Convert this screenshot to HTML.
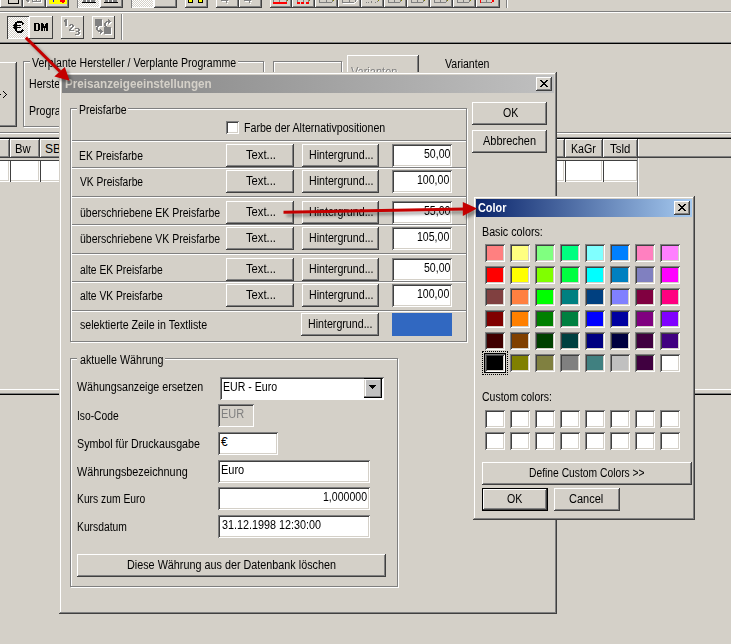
<!DOCTYPE html>
<html><head><meta charset="utf-8"><style>
html,body{margin:0;padding:0}
body{width:731px;height:644px;background:#d4d0c8;position:relative;overflow:hidden;font-family:"Liberation Sans",sans-serif;font-size:12px;color:#000}
body>div,body>span,body>svg{position:absolute}
.t{white-space:nowrap;line-height:14px;display:block;transform-origin:0 0}
</style></head><body>
<div style="left:0px;top:-16px;width:23px;height:24px;background:#d4d0c8;box-shadow:inset -1px -1px #404040,inset 1px 1px #ffffff,inset -2px -2px #808080,inset 2px 2px #d4d0c8;"></div>
<div style="left:23px;top:-16px;width:23px;height:24px;background:#d4d0c8;box-shadow:inset -1px -1px #404040,inset 1px 1px #ffffff,inset -2px -2px #808080,inset 2px 2px #d4d0c8;"></div>
<div style="left:46px;top:-16px;width:23px;height:24px;background:#d4d0c8;box-shadow:inset -1px -1px #404040,inset 1px 1px #ffffff,inset -2px -2px #808080,inset 2px 2px #d4d0c8;"></div>
<div style="left:77px;top:-16px;width:23px;height:24px;background:repeating-conic-gradient(#fff 0 25%,#d4d0c8 0 50%) 0 0/2px 2px;box-shadow:inset 1px 1px #808080,inset -1px -1px #ffffff"></div>
<div style="left:100px;top:-16px;width:23px;height:24px;background:#d4d0c8;box-shadow:inset -1px -1px #404040,inset 1px 1px #ffffff,inset -2px -2px #808080,inset 2px 2px #d4d0c8;"></div>
<div style="left:131px;top:-16px;width:23px;height:24px;background:repeating-conic-gradient(#fff 0 25%,#d4d0c8 0 50%) 0 0/2px 2px;box-shadow:inset 1px 1px #808080,inset -1px -1px #ffffff"></div>
<div style="left:154px;top:-16px;width:23px;height:24px;background:#d4d0c8;box-shadow:inset -1px -1px #404040,inset 1px 1px #ffffff,inset -2px -2px #808080,inset 2px 2px #d4d0c8;"></div>
<div style="left:185px;top:-16px;width:23px;height:24px;background:#d4d0c8;box-shadow:inset -1px -1px #404040,inset 1px 1px #ffffff,inset -2px -2px #808080,inset 2px 2px #d4d0c8;"></div>
<div style="left:216px;top:-16px;width:23px;height:24px;background:#d4d0c8;box-shadow:inset -1px -1px #404040,inset 1px 1px #ffffff,inset -2px -2px #808080,inset 2px 2px #d4d0c8;"></div>
<div style="left:239px;top:-16px;width:23px;height:24px;background:#d4d0c8;box-shadow:inset -1px -1px #404040,inset 1px 1px #ffffff,inset -2px -2px #808080,inset 2px 2px #d4d0c8;"></div>
<div style="left:270px;top:-16px;width:22px;height:24px;background:#d4d0c8;box-shadow:inset -1px -1px #404040,inset 1px 1px #ffffff,inset -2px -2px #808080,inset 2px 2px #d4d0c8;"></div>
<div style="left:292px;top:-16px;width:23px;height:24px;background:#d4d0c8;box-shadow:inset -1px -1px #404040,inset 1px 1px #ffffff,inset -2px -2px #808080,inset 2px 2px #d4d0c8;"></div>
<div style="left:315px;top:-16px;width:23px;height:24px;background:#d4d0c8;box-shadow:inset -1px -1px #404040,inset 1px 1px #ffffff,inset -2px -2px #808080,inset 2px 2px #d4d0c8;"></div>
<div style="left:338px;top:-16px;width:23px;height:24px;background:#d4d0c8;box-shadow:inset -1px -1px #404040,inset 1px 1px #ffffff,inset -2px -2px #808080,inset 2px 2px #d4d0c8;"></div>
<div style="left:361px;top:-16px;width:23px;height:24px;background:#d4d0c8;box-shadow:inset -1px -1px #404040,inset 1px 1px #ffffff,inset -2px -2px #808080,inset 2px 2px #d4d0c8;"></div>
<div style="left:384px;top:-16px;width:23px;height:24px;background:#d4d0c8;box-shadow:inset -1px -1px #404040,inset 1px 1px #ffffff,inset -2px -2px #808080,inset 2px 2px #d4d0c8;"></div>
<div style="left:407px;top:-16px;width:23px;height:24px;background:#d4d0c8;box-shadow:inset -1px -1px #404040,inset 1px 1px #ffffff,inset -2px -2px #808080,inset 2px 2px #d4d0c8;"></div>
<div style="left:430px;top:-16px;width:23px;height:24px;background:#d4d0c8;box-shadow:inset -1px -1px #404040,inset 1px 1px #ffffff,inset -2px -2px #808080,inset 2px 2px #d4d0c8;"></div>
<div style="left:453px;top:-16px;width:23px;height:24px;background:#d4d0c8;box-shadow:inset -1px -1px #404040,inset 1px 1px #ffffff,inset -2px -2px #808080,inset 2px 2px #d4d0c8;"></div>
<div style="left:476px;top:-16px;width:24px;height:24px;background:#d4d0c8;box-shadow:inset -1px -1px #404040,inset 1px 1px #ffffff,inset -2px -2px #808080,inset 2px 2px #d4d0c8;"></div>
<svg style="position:absolute;left:0;top:0" width="510" height="8"><rect x="8" y="0" width="1" height="4" fill="#000"/><rect x="18" y="0" width="1" height="4" fill="#000"/><rect x="8" y="3" width="11" height="1" fill="#000"/><rect x="27" y="1" width="3" height="1" fill="#fff"/><rect x="28" y="2" width="2" height="1" fill="#fff"/><rect x="33" y="0" width="1" height="3" fill="#fff"/><rect x="37" y="0" width="1" height="3" fill="#fff"/><rect x="41" y="0" width="1" height="3" fill="#fff"/><rect x="33" y="2" width="9" height="1" fill="#fff"/><rect x="26" y="0" width="3" height="1" fill="#808080"/><rect x="27" y="1" width="2" height="1" fill="#808080"/><rect x="32" y="0" width="1" height="2" fill="#808080"/><rect x="36" y="0" width="1" height="2" fill="#808080"/><rect x="40" y="0" width="1" height="2" fill="#808080"/><rect x="32" y="1" width="9" height="1" fill="#808080"/><rect x="49" y="0" width="18" height="4" fill="#ffff00"/><rect x="53" y="0" width="1" height="2" fill="#0000ff"/><rect x="60" y="0" width="5" height="2" fill="#ff0000"/><rect x="62" y="2" width="2" height="1" fill="#ff0000"/><rect x="82" y="2" width="14" height="1" fill="#000"/><rect x="83" y="0" width="3" height="2" fill="#808080"/><rect x="87" y="0" width="3" height="2" fill="#808080"/><rect x="91" y="0" width="4" height="2" fill="#808080"/><rect x="86" y="0" width="1" height="2" fill="#fff"/><rect x="90" y="0" width="1" height="2" fill="#fff"/><rect x="104" y="2" width="14" height="1" fill="#000"/><rect x="105" y="0" width="3" height="2" fill="#808080"/><rect x="109" y="0" width="3" height="2" fill="#808080"/><rect x="113" y="0" width="4" height="2" fill="#808080"/><rect x="108" y="0" width="1" height="2" fill="#fff"/><rect x="112" y="0" width="1" height="2" fill="#fff"/><rect x="188" y="0" width="5" height="3" fill="#000"/><rect x="189" y="0" width="3" height="2" fill="#ffff00"/><rect x="198" y="0" width="5" height="3" fill="#000"/><rect x="199" y="0" width="3" height="2" fill="#ffff00"/><rect x="222" y="1" width="7" height="1" fill="#fff"/><rect x="227" y="3" width="1" height="1" fill="#fff"/><rect x="221" y="0" width="7" height="1" fill="#808080"/><rect x="226" y="2" width="1" height="1" fill="#808080"/><rect x="226" y="0" width="1" height="2" fill="#808080"/><rect x="245" y="1" width="7" height="1" fill="#fff"/><rect x="250" y="3" width="1" height="1" fill="#fff"/><rect x="244" y="0" width="7" height="1" fill="#808080"/><rect x="249" y="2" width="1" height="1" fill="#808080"/><rect x="249" y="0" width="1" height="2" fill="#808080"/><rect x="273" y="0" width="1" height="2" fill="#808080"/><rect x="279" y="0" width="1" height="2" fill="#808080"/><rect x="286" y="0" width="1" height="2" fill="#808080"/><rect x="273" y="2" width="14" height="2" fill="#ff0000"/><rect x="287" y="0" width="1" height="1" fill="#808000"/><rect x="297" y="0" width="1" height="2" fill="#808080"/><rect x="303" y="0" width="1" height="2" fill="#808080"/><rect x="308" y="0" width="1" height="2" fill="#808080"/><rect x="297" y="2" width="3" height="2" fill="#ff0000"/><rect x="301" y="2" width="3" height="2" fill="#ff0000"/><rect x="306" y="2" width="3" height="2" fill="#ff0000"/><rect x="309" y="0" width="1" height="1" fill="#808000"/><rect x="319" y="0" width="1" height="3" fill="#808080"/><rect x="326" y="0" width="1" height="3" fill="#808080"/><rect x="332" y="0" width="1" height="2" fill="#808080"/><rect x="319" y="2" width="13" height="1" fill="#808080"/><rect x="333" y="0" width="1" height="1" fill="#808000"/><rect x="342" y="0" width="1" height="3" fill="#808080"/><rect x="349" y="0" width="1" height="2" fill="#808080"/><rect x="355" y="0" width="1" height="2" fill="#808080"/><rect x="342" y="2" width="12" height="1" fill="#808080"/><rect x="343" y="3" width="12" height="1" fill="#fff"/><rect x="355" y="2" width="1" height="1" fill="#fff"/><rect x="356" y="1" width="1" height="1" fill="#fff"/><rect x="357" y="0" width="1" height="1" fill="#fff"/><rect x="366" y="2" width="1" height="1" fill="#808080"/><rect x="368" y="2" width="1" height="1" fill="#808080"/><rect x="371" y="1" width="1" height="2" fill="#808080"/><rect x="375" y="2" width="1" height="1" fill="#808080"/><rect x="377" y="1" width="1" height="1" fill="#808080"/><rect x="378" y="0" width="1" height="1" fill="#808000"/><rect x="388" y="0" width="1" height="3" fill="#808080"/><rect x="394" y="0" width="1" height="3" fill="#808080"/><rect x="400" y="0" width="1" height="2" fill="#808080"/><rect x="388" y="2" width="12" height="1" fill="#808080"/><rect x="401" y="0" width="1" height="1" fill="#808000"/><rect x="411" y="0" width="1" height="3" fill="#808080"/><rect x="417" y="0" width="1" height="3" fill="#808080"/><rect x="423" y="0" width="1" height="2" fill="#808080"/><rect x="411" y="2" width="12" height="1" fill="#808080"/><rect x="424" y="0" width="1" height="1" fill="#808000"/><rect x="434" y="0" width="1" height="3" fill="#808080"/><rect x="440" y="0" width="1" height="3" fill="#808080"/><rect x="446" y="0" width="1" height="2" fill="#808080"/><rect x="434" y="2" width="12" height="1" fill="#808080"/><rect x="447" y="0" width="1" height="1" fill="#808000"/><rect x="457" y="0" width="1" height="3" fill="#808080"/><rect x="463" y="0" width="1" height="3" fill="#808080"/><rect x="469" y="0" width="1" height="2" fill="#808080"/><rect x="457" y="2" width="12" height="1" fill="#808080"/><rect x="470" y="0" width="1" height="1" fill="#808000"/><rect x="480" y="0" width="1" height="3" fill="#808080"/><rect x="486" y="0" width="1" height="2" fill="#808080"/><rect x="492" y="0" width="1" height="2" fill="#808080"/><rect x="481" y="2" width="11" height="1" fill="#808080"/><rect x="480" y="0" width="1" height="3" fill="#ff0000"/><rect x="492" y="0" width="2" height="2" fill="#ff0000"/><rect x="491" y="2" width="1" height="1" fill="#ff0000"/></svg>
<div style="left:506px;top:0px;width:1px;height:8px;background:#808080"></div>
<div style="left:507px;top:0px;width:1px;height:8px;background:#ffffff"></div>
<div style="left:0px;top:11px;width:731px;height:1px;background:#808080"></div>
<div style="left:0px;top:12px;width:731px;height:1px;background:#ffffff"></div>
<div style="left:7px;top:16px;width:22px;height:23px;background:repeating-conic-gradient(#fff 0 25%,#d4d0c8 0 50%) 0 0/2px 2px;box-shadow:inset 1px 1px #404040,inset -1px -1px #ffffff"></div>
<div style="left:29px;top:16px;width:24px;height:23px;background:#d4d0c8;box-shadow:inset -1px -1px #404040,inset 1px 1px #ffffff"></div>
<div style="left:61px;top:16px;width:23px;height:23px;background:#d4d0c8;box-shadow:inset -1px -1px #404040,inset 1px 1px #ffffff"></div>
<div style="left:92px;top:16px;width:23px;height:23px;background:#d4d0c8;box-shadow:inset -1px -1px #404040,inset 1px 1px #ffffff"></div>
<svg style="position:absolute;left:0;top:0" width="120" height="42"><path d="M17 21h5v1h-5zM15 22h8v1h-8zM15 23h2v1h-2zM22 23h2v1h-2zM14 24h3v1h-3zM22 24h1v1h-1zM13 25h8v1h-8zM14 26h3v1h-3zM13 27h8v1h-8zM14 28h3v1h-3zM15 29h2v1h-2zM22 29h1v1h-1zM15 30h2v1h-2zM21 30h3v1h-3zM16 31h7v1h-7zM17 32h5v1h-5z" fill="#000"/><path d="M34 23h5v1h-5zM34 30h5v1h-5zM34 24h2v6h-2zM38 24h2v6h-2zM41 23h2v8h-2zM46 23h2v8h-2zM43 24h1v3h-1zM45 24h1v3h-1zM44 26h1v5h-1zM43 26h3v2h-3z" fill="#000"/><path d="M66 20h2v7h-2zM65 21h1v2h-1zM71 25h3v1h-3zM70 26h2v1h-2zM73 26h2v2h-2zM72 28h2v1h-2zM71 29h2v1h-2zM70 30h2v1h-2zM70 31h5v1h-5zM76 29h4v1h-4zM79 30h2v2h-2zM77 32h3v1h-3zM79 33h2v2h-2zM76 35h4v1h-4zM96 20h7v7h-7zM105 28h7v7h-7zM98 27h2v1h-2zM97 28h2v3h-2zM98 31h3v1h-3zM99 32h2v1h-2zM101 30h1v5h-1zM102 31h1v3h-1zM103 32h1v1h-1zM106 27h2v1h-2zM105 24h2v3h-2zM106 23h2v1h-2zM107 22h2v1h-2zM109 20h1v5h-1zM110 21h1v3h-1zM111 22h1v1h-1z" fill="#fff"/><path d="M65 19h2v7h-2zM64 20h1v2h-1zM70 24h3v1h-3zM69 25h2v1h-2zM72 25h2v2h-2zM71 27h2v1h-2zM70 28h2v1h-2zM69 29h2v1h-2zM69 30h5v1h-5zM75 28h4v1h-4zM78 29h2v2h-2zM76 31h3v1h-3zM78 32h2v2h-2zM75 34h4v1h-4zM95 19h7v7h-7zM104 27h7v7h-7zM97 26h2v1h-2zM96 27h2v3h-2zM97 30h3v1h-3zM98 31h2v1h-2zM100 29h1v5h-1zM101 30h1v3h-1zM102 31h1v1h-1zM105 26h2v1h-2zM104 23h2v3h-2zM105 22h2v1h-2zM106 21h2v1h-2zM108 19h1v5h-1zM109 20h1v3h-1zM110 21h1v1h-1z" fill="#808080"/></svg>
<div style="left:121px;top:14px;width:1px;height:26px;background:#808080"></div>
<div style="left:122px;top:14px;width:1px;height:26px;background:#ffffff"></div>
<div style="left:0px;top:43px;width:731px;height:1px;background:#000"></div>
<div style="left:0px;top:42px;width:731px;height:1px;background:#808080"></div>
<div style="left:-20px;top:62px;width:37px;height:65px;background:#d4d0c8;box-shadow:inset -1px -1px #404040,inset 1px 1px #ffffff,inset -2px -2px #808080,inset 2px 2px #d4d0c8;"></div>
<svg style="position:absolute;left:0;top:0" width="10" height="100"><path d="M0 94h1v1h-1zM3 91h1v1h-1zM4 92h1v1h-1zM5 93h1v1h-1zM6 94h1v1h-1zM5 95h1v1h-1zM4 96h1v1h-1zM3 97h1v1h-1z" fill="#000"/></svg>
<div style="left:24px;top:62px;width:241px;height:66px;border:1px solid #ffffff;box-sizing:border-box"></div>
<div style="left:23px;top:61px;width:241px;height:66px;border:1px solid #808080;box-sizing:border-box"></div>
<div style="left:30px;top:55px;width:208px;height:14px;background:#d4d0c8"></div>
<span class="t" style="left:32.00px;top:56px;font-size:12px;font-weight:normal;color:#000;transform:scaleX(0.8793);">Verplante Hersteller / Verplante Programme</span>
<span class="t" style="left:29.12px;top:77px;font-size:12px;font-weight:normal;color:#000;transform:scaleX(0.8800);">Hersteller</span>
<span class="t" style="left:29.12px;top:104px;font-size:12px;font-weight:normal;color:#000;transform:scaleX(0.8800);">Programm</span>
<div style="left:274px;top:62px;width:69px;height:29px;border:1px solid #ffffff;box-sizing:border-box"></div>
<div style="left:273px;top:61px;width:69px;height:29px;border:1px solid #808080;box-sizing:border-box"></div>
<div style="left:347px;top:55px;width:72px;height:30px;background:#d4d0c8;box-shadow:inset -1px -1px #404040,inset 1px 1px #ffffff,inset -2px -2px #808080"></div>
<span class="t" style="left:352.00px;top:66px;font-size:12px;font-weight:normal;color:#fff;transform:scaleX(0.9200);">Varianten</span>
<span class="t" style="left:351.00px;top:65px;font-size:12px;font-weight:normal;color:#808080;transform:scaleX(0.9200);">Varianten</span>
<span class="t" style="left:445.00px;top:57px;font-size:12px;font-weight:normal;color:#000;transform:scaleX(0.8800);">Varianten</span>
<div style="left:0px;top:132px;width:731px;height:1px;background:#808080"></div>
<div style="left:0px;top:133px;width:731px;height:1px;background:#ffffff"></div>
<div style="left:0px;top:137px;width:638px;height:1px;background:#808080"></div>
<div style="left:0px;top:138px;width:638px;height:1px;background:#000"></div>
<div style="left:-20px;top:139px;width:30px;height:19px;background:#d4d0c8;box-shadow:inset -1px -1px #404040,inset 1px 1px #ffffff,inset -2px -2px #808080"></div>
<div style="left:10px;top:139px;width:30px;height:19px;background:#d4d0c8;box-shadow:inset -1px -1px #404040,inset 1px 1px #ffffff,inset -2px -2px #808080"></div>
<div style="left:40px;top:139px;width:30px;height:19px;background:#d4d0c8;box-shadow:inset -1px -1px #404040,inset 1px 1px #ffffff,inset -2px -2px #808080"></div>
<div style="left:535px;top:139px;width:30px;height:19px;background:#d4d0c8;box-shadow:inset -1px -1px #404040,inset 1px 1px #ffffff,inset -2px -2px #808080"></div>
<div style="left:565px;top:139px;width:38px;height:19px;background:#d4d0c8;box-shadow:inset -1px -1px #404040,inset 1px 1px #ffffff,inset -2px -2px #808080"></div>
<div style="left:603px;top:139px;width:35px;height:19px;background:#d4d0c8;box-shadow:inset -1px -1px #404040,inset 1px 1px #ffffff,inset -2px -2px #808080"></div>
<span class="t" style="left:15.06px;top:142px;font-size:12px;font-weight:normal;color:#000;transform:scaleX(0.9375);">Bw</span>
<span class="t" style="left:45.00px;top:142px;font-size:12px;font-weight:normal;color:#000;transform:scaleX(1.0000);">SB</span>
<span class="t" style="left:571.11px;top:142px;font-size:12px;font-weight:normal;color:#000;transform:scaleX(0.8889);">KaGr</span>
<span class="t" style="left:610.00px;top:142px;font-size:12px;font-weight:normal;color:#000;transform:scaleX(0.9524);">Tsld</span>
<div style="left:638px;top:137px;width:93px;height:1px;background:#808080"></div>
<div style="left:638px;top:138px;width:93px;height:1px;background:#000"></div>
<div style="left:638px;top:156px;width:93px;height:1px;background:#808080"></div>
<div style="left:638px;top:157px;width:93px;height:1px;background:#404040"></div>
<div style="left:638px;top:139px;width:1px;height:17px;background:#ffffff"></div>
<div style="left:-20px;top:160px;width:30px;height:22px;background:#fff;box-shadow:inset 1px 1px #404040,inset -1px -1px #ffffff,inset -2px -2px #d4d0c8"></div>
<div style="left:10px;top:160px;width:30px;height:22px;background:#fff;box-shadow:inset 1px 1px #404040,inset -1px -1px #ffffff,inset -2px -2px #d4d0c8"></div>
<div style="left:40px;top:160px;width:30px;height:22px;background:#fff;box-shadow:inset 1px 1px #404040,inset -1px -1px #ffffff,inset -2px -2px #d4d0c8"></div>
<div style="left:535px;top:160px;width:30px;height:22px;background:#fff;box-shadow:inset 1px 1px #404040,inset -1px -1px #ffffff,inset -2px -2px #d4d0c8"></div>
<div style="left:565px;top:160px;width:38px;height:22px;background:#fff;box-shadow:inset 1px 1px #404040,inset -1px -1px #ffffff,inset -2px -2px #d4d0c8"></div>
<div style="left:603px;top:160px;width:35px;height:22px;background:#fff;box-shadow:inset 1px 1px #404040,inset -1px -1px #ffffff,inset -2px -2px #d4d0c8"></div>
<div style="left:637px;top:158px;width:1px;height:38px;background:#808080"></div>
<div style="left:638px;top:158px;width:1px;height:38px;background:#ffffff"></div>
<div style="left:0px;top:389px;width:731px;height:1px;background:#ffffff"></div>
<div style="left:0px;top:393px;width:731px;height:1px;background:#808080"></div>
<div style="left:0px;top:394px;width:731px;height:1px;background:#000"></div>
<div style="left:59px;top:72px;width:498px;height:542px;background:#d4d0c8;box-shadow:inset -1px -1px #404040,inset 1px 1px #d4d0c8,inset -2px -2px #808080,inset 2px 2px #ffffff"></div>
<div style="left:62px;top:75px;width:492px;height:18px;background:linear-gradient(to right,#808080,#c0c0c0)"></div>
<span class="t" style="left:65.00px;top:77px;font-size:12px;font-weight:bold;color:#d4d0c8;transform:scaleX(0.9735);">Preisanzeigeeinstellungen</span>
<div style="left:536px;top:77px;width:16px;height:14px;background:#d4d0c8;box-shadow:inset -1px -1px #404040,inset 1px 1px #ffffff,inset -2px -2px #808080,inset 2px 2px #d4d0c8;"></div>
<svg style="position:absolute;left:536px;top:77px" width="16" height="14"><path d="M4 3h1v1h-1zM5 3h1v1h-1zM10 3h1v1h-1zM11 3h1v1h-1zM5 4h1v1h-1zM6 4h1v1h-1zM9 4h1v1h-1zM10 4h1v1h-1zM6 5h1v1h-1zM7 5h1v1h-1zM8 5h1v1h-1zM9 5h1v1h-1zM7 6h1v1h-1zM8 6h1v1h-1zM6 7h1v1h-1zM7 7h1v1h-1zM8 7h1v1h-1zM9 7h1v1h-1zM5 8h1v1h-1zM6 8h1v1h-1zM9 8h1v1h-1zM10 8h1v1h-1zM4 9h1v1h-1zM5 9h1v1h-1zM10 9h1v1h-1zM11 9h1v1h-1z" fill="#000"/></svg>
<div style="left:472px;top:102px;width:75px;height:23px;background:#d4d0c8;box-shadow:inset -1px -1px #404040,inset 1px 1px #ffffff,inset -2px -2px #808080,inset 2px 2px #d4d0c8;"></div>
<span class="t" style="left:503.00px;top:106px;font-size:12px;font-weight:normal;color:#000;transform:scaleX(0.8824);">OK</span>
<div style="left:472px;top:130px;width:75px;height:23px;background:#d4d0c8;box-shadow:inset -1px -1px #404040,inset 1px 1px #ffffff,inset -2px -2px #808080,inset 2px 2px #d4d0c8;"></div>
<span class="t" style="left:483.00px;top:134px;font-size:12px;font-weight:normal;color:#000;transform:scaleX(0.9138);">Abbrechen</span>
<div style="left:71px;top:109px;width:397px;height:234px;border:1px solid #ffffff;box-sizing:border-box"></div>
<div style="left:70px;top:108px;width:397px;height:234px;border:1px solid #808080;box-sizing:border-box"></div>
<div style="left:77px;top:102px;width:51px;height:14px;background:#d4d0c8"></div>
<span class="t" style="left:79.13px;top:103px;font-size:12px;font-weight:normal;color:#000;transform:scaleX(0.8704);">Preisfarbe</span>
<div style="left:226px;top:121px;width:13px;height:13px;background:#ffffff;box-shadow:inset 1px 1px #808080,inset -1px -1px #ffffff,inset 2px 2px #404040,inset -2px -2px #d4d0c8;"></div>
<span class="t" style="left:244.11px;top:121px;font-size:12px;font-weight:normal;color:#000;transform:scaleX(0.8861);">Farbe der Alternativpositionen</span>
<div style="left:72px;top:140px;width:394px;height:1px;background:#808080"></div>
<div style="left:72px;top:141px;width:394px;height:1px;background:#ffffff"></div>
<div style="left:72px;top:167px;width:394px;height:1px;background:#808080"></div>
<div style="left:72px;top:168px;width:394px;height:1px;background:#ffffff"></div>
<div style="left:72px;top:196px;width:394px;height:1px;background:#808080"></div>
<div style="left:72px;top:197px;width:394px;height:1px;background:#ffffff"></div>
<div style="left:72px;top:224px;width:394px;height:1px;background:#808080"></div>
<div style="left:72px;top:225px;width:394px;height:1px;background:#ffffff"></div>
<div style="left:72px;top:253px;width:394px;height:1px;background:#808080"></div>
<div style="left:72px;top:254px;width:394px;height:1px;background:#ffffff"></div>
<div style="left:72px;top:281px;width:394px;height:1px;background:#808080"></div>
<div style="left:72px;top:282px;width:394px;height:1px;background:#ffffff"></div>
<div style="left:72px;top:310px;width:394px;height:1px;background:#808080"></div>
<div style="left:72px;top:311px;width:394px;height:1px;background:#ffffff"></div>
<span class="t" style="left:79.14px;top:149px;font-size:12px;font-weight:normal;color:#000;transform:scaleX(0.8630);">EK Preisfarbe</span>
<div style="left:226px;top:144px;width:68px;height:23px;background:#d4d0c8;box-shadow:inset -1px -1px #404040,inset 1px 1px #ffffff,inset -2px -2px #808080,inset 2px 2px #d4d0c8;"></div>
<span class="t" style="left:246.00px;top:148px;font-size:12px;font-weight:normal;color:#000;transform:scaleX(0.9355);">Text...</span>
<div style="left:302px;top:144px;width:77px;height:23px;background:#d4d0c8;box-shadow:inset -1px -1px #404040,inset 1px 1px #ffffff,inset -2px -2px #808080,inset 2px 2px #d4d0c8;"></div>
<span class="t" style="left:309.11px;top:148px;font-size:12px;font-weight:normal;color:#000;transform:scaleX(0.8873);">Hintergrund...</span>
<div style="left:392px;top:144px;width:60px;height:23px;background:#ffffff;box-shadow:inset 1px 1px #808080,inset -1px -1px #ffffff,inset 2px 2px #404040,inset -2px -2px #d4d0c8;"></div>
<span class="t" style="left:423.60px;top:147px;font-size:12px;font-weight:normal;color:#000;transform:scaleX(0.8800);">50,00</span>
<span class="t" style="left:80.00px;top:175px;font-size:12px;font-weight:normal;color:#000;transform:scaleX(0.8514);">VK Preisfarbe</span>
<div style="left:226px;top:170px;width:68px;height:23px;background:#d4d0c8;box-shadow:inset -1px -1px #404040,inset 1px 1px #ffffff,inset -2px -2px #808080,inset 2px 2px #d4d0c8;"></div>
<span class="t" style="left:246.00px;top:174px;font-size:12px;font-weight:normal;color:#000;transform:scaleX(0.9355);">Text...</span>
<div style="left:302px;top:170px;width:77px;height:23px;background:#d4d0c8;box-shadow:inset -1px -1px #404040,inset 1px 1px #ffffff,inset -2px -2px #808080,inset 2px 2px #d4d0c8;"></div>
<span class="t" style="left:309.11px;top:174px;font-size:12px;font-weight:normal;color:#000;transform:scaleX(0.8873);">Hintergrund...</span>
<div style="left:392px;top:170px;width:60px;height:23px;background:#ffffff;box-shadow:inset 1px 1px #808080,inset -1px -1px #ffffff,inset 2px 2px #404040,inset -2px -2px #d4d0c8;"></div>
<span class="t" style="left:417.44px;top:173px;font-size:12px;font-weight:normal;color:#000;transform:scaleX(0.8800);">100,00</span>
<span class="t" style="left:80.00px;top:206px;font-size:12px;font-weight:normal;color:#000;transform:scaleX(0.8750);">&uuml;berschriebene EK Preisfarbe</span>
<div style="left:226px;top:201px;width:68px;height:23px;background:#d4d0c8;box-shadow:inset -1px -1px #404040,inset 1px 1px #ffffff,inset -2px -2px #808080,inset 2px 2px #d4d0c8;"></div>
<span class="t" style="left:246.00px;top:205px;font-size:12px;font-weight:normal;color:#000;transform:scaleX(0.9355);">Text...</span>
<div style="left:302px;top:201px;width:77px;height:23px;background:#d4d0c8;box-shadow:inset -1px -1px #404040,inset 1px 1px #ffffff,inset -2px -2px #808080,inset 2px 2px #d4d0c8;"></div>
<span class="t" style="left:309.11px;top:205px;font-size:12px;font-weight:normal;color:#000;transform:scaleX(0.8873);">Hintergrund...</span>
<div style="left:392px;top:201px;width:60px;height:23px;background:#ffffff;box-shadow:inset 1px 1px #808080,inset -1px -1px #ffffff,inset 2px 2px #404040,inset -2px -2px #d4d0c8;"></div>
<span class="t" style="left:423.60px;top:204px;font-size:12px;font-weight:normal;color:#000;transform:scaleX(0.8800);">55,00</span>
<span class="t" style="left:80.00px;top:232px;font-size:12px;font-weight:normal;color:#000;transform:scaleX(0.8750);">&uuml;berschriebene VK Preisfarbe</span>
<div style="left:226px;top:227px;width:68px;height:23px;background:#d4d0c8;box-shadow:inset -1px -1px #404040,inset 1px 1px #ffffff,inset -2px -2px #808080,inset 2px 2px #d4d0c8;"></div>
<span class="t" style="left:246.00px;top:231px;font-size:12px;font-weight:normal;color:#000;transform:scaleX(0.9355);">Text...</span>
<div style="left:302px;top:227px;width:77px;height:23px;background:#d4d0c8;box-shadow:inset -1px -1px #404040,inset 1px 1px #ffffff,inset -2px -2px #808080,inset 2px 2px #d4d0c8;"></div>
<span class="t" style="left:309.11px;top:231px;font-size:12px;font-weight:normal;color:#000;transform:scaleX(0.8873);">Hintergrund...</span>
<div style="left:392px;top:227px;width:60px;height:23px;background:#ffffff;box-shadow:inset 1px 1px #808080,inset -1px -1px #ffffff,inset 2px 2px #404040,inset -2px -2px #d4d0c8;"></div>
<span class="t" style="left:417.44px;top:230px;font-size:12px;font-weight:normal;color:#000;transform:scaleX(0.8800);">105,00</span>
<span class="t" style="left:80.00px;top:263px;font-size:12px;font-weight:normal;color:#000;transform:scaleX(0.8557);">alte EK Preisfarbe</span>
<div style="left:226px;top:258px;width:68px;height:23px;background:#d4d0c8;box-shadow:inset -1px -1px #404040,inset 1px 1px #ffffff,inset -2px -2px #808080,inset 2px 2px #d4d0c8;"></div>
<span class="t" style="left:246.00px;top:262px;font-size:12px;font-weight:normal;color:#000;transform:scaleX(0.9355);">Text...</span>
<div style="left:302px;top:258px;width:77px;height:23px;background:#d4d0c8;box-shadow:inset -1px -1px #404040,inset 1px 1px #ffffff,inset -2px -2px #808080,inset 2px 2px #d4d0c8;"></div>
<span class="t" style="left:309.11px;top:262px;font-size:12px;font-weight:normal;color:#000;transform:scaleX(0.8873);">Hintergrund...</span>
<div style="left:392px;top:258px;width:60px;height:23px;background:#ffffff;box-shadow:inset 1px 1px #808080,inset -1px -1px #ffffff,inset 2px 2px #404040,inset -2px -2px #d4d0c8;"></div>
<span class="t" style="left:423.60px;top:261px;font-size:12px;font-weight:normal;color:#000;transform:scaleX(0.8800);">50,00</span>
<span class="t" style="left:80.00px;top:289px;font-size:12px;font-weight:normal;color:#000;transform:scaleX(0.8557);">alte VK Preisfarbe</span>
<div style="left:226px;top:284px;width:68px;height:23px;background:#d4d0c8;box-shadow:inset -1px -1px #404040,inset 1px 1px #ffffff,inset -2px -2px #808080,inset 2px 2px #d4d0c8;"></div>
<span class="t" style="left:246.00px;top:288px;font-size:12px;font-weight:normal;color:#000;transform:scaleX(0.9355);">Text...</span>
<div style="left:302px;top:284px;width:77px;height:23px;background:#d4d0c8;box-shadow:inset -1px -1px #404040,inset 1px 1px #ffffff,inset -2px -2px #808080,inset 2px 2px #d4d0c8;"></div>
<span class="t" style="left:309.11px;top:288px;font-size:12px;font-weight:normal;color:#000;transform:scaleX(0.8873);">Hintergrund...</span>
<div style="left:392px;top:284px;width:60px;height:23px;background:#ffffff;box-shadow:inset 1px 1px #808080,inset -1px -1px #ffffff,inset 2px 2px #404040,inset -2px -2px #d4d0c8;"></div>
<span class="t" style="left:417.44px;top:287px;font-size:12px;font-weight:normal;color:#000;transform:scaleX(0.8800);">100,00</span>
<span class="t" style="left:80.00px;top:318px;font-size:12px;font-weight:normal;color:#000;transform:scaleX(0.8881);">selektierte Zeile in Textliste</span>
<div style="left:301px;top:313px;width:78px;height:23px;background:#d4d0c8;box-shadow:inset -1px -1px #404040,inset 1px 1px #ffffff,inset -2px -2px #808080,inset 2px 2px #d4d0c8;"></div>
<span class="t" style="left:308.11px;top:317px;font-size:12px;font-weight:normal;color:#000;transform:scaleX(0.8873);">Hintergrund...</span>
<div style="left:392px;top:313px;width:60px;height:23px;background:#3168c1"></div>
<div style="left:71px;top:359px;width:328px;height:229px;border:1px solid #ffffff;box-sizing:border-box"></div>
<div style="left:70px;top:358px;width:328px;height:229px;border:1px solid #808080;box-sizing:border-box"></div>
<div style="left:77px;top:352px;width:88px;height:14px;background:#d4d0c8"></div>
<span class="t" style="left:80.00px;top:353px;font-size:12px;font-weight:normal;color:#000;transform:scaleX(0.8925);">aktuelle W&auml;hrung</span>
<span class="t" style="left:77.00px;top:380px;font-size:12px;font-weight:normal;color:#000;transform:scaleX(0.8873);">W&auml;hungsanzeige ersetzen</span>
<span class="t" style="left:77.15px;top:409px;font-size:12px;font-weight:normal;color:#000;transform:scaleX(0.8542);">Iso-Code</span>
<span class="t" style="left:77.11px;top:437px;font-size:12px;font-weight:normal;color:#000;transform:scaleX(0.8905);">Symbol f&uuml;r Druckausgabe</span>
<span class="t" style="left:77.00px;top:465px;font-size:12px;font-weight:normal;color:#000;transform:scaleX(0.9016);">W&auml;hrungsbezeichnung</span>
<span class="t" style="left:77.14px;top:492px;font-size:12px;font-weight:normal;color:#000;transform:scaleX(0.8590);">Kurs zum Euro</span>
<span class="t" style="left:77.14px;top:520px;font-size:12px;font-weight:normal;color:#000;transform:scaleX(0.8596);">Kursdatum</span>
<div style="left:220px;top:377px;width:164px;height:23px;background:#fff;box-shadow:inset 1px 1px #808080,inset -1px -1px #ffffff,inset 2px 2px #404040,inset -2px -2px #ffffff"></div>
<span class="t" style="left:223.12px;top:380px;font-size:12px;font-weight:normal;color:#000;transform:scaleX(0.8833);">EUR - Euro</span>
<div style="left:364px;top:378px;width:18px;height:1px;background:#000"></div>
<div style="left:364px;top:379px;width:18px;height:19px;background:#c0c0c0;box-shadow:inset -1px -1px #000,inset -2px -2px #808080,inset 0 1px #ffffff,inset 1px 0 #d4d0c8,inset 2px 0 #ffffff"></div>
<svg style="position:absolute;left:364px;top:379px" width="18" height="19"><path d="M5 6h7v1h-1v1h-1v1h-1v1h-1v-1h-1v-1h-1v-1h-1z" fill="#000"/></svg>
<div style="left:218px;top:404px;width:36px;height:23px;background:#d4d0c8;box-shadow:inset 1px 1px #808080,inset -1px -1px #ffffff,inset 2px 2px #404040,inset -2px -2px #d4d0c8;"></div>
<span class="t" style="left:221.08px;top:407px;font-size:12px;font-weight:normal;color:#808080;transform:scaleX(0.9167);">EUR</span>
<div style="left:218px;top:432px;width:60px;height:23px;background:#ffffff;box-shadow:inset 1px 1px #808080,inset -1px -1px #ffffff,inset 2px 2px #404040,inset -2px -2px #d4d0c8;"></div>
<span class="t" style="left:221.00px;top:435px;font-size:12px;font-weight:normal;color:#000;transform:scaleX(1.0000);">&euro;</span>
<div style="left:218px;top:460px;width:152px;height:23px;background:#ffffff;box-shadow:inset 1px 1px #808080,inset -1px -1px #ffffff,inset 2px 2px #404040,inset -2px -2px #d4d0c8;"></div>
<span class="t" style="left:221.08px;top:463px;font-size:12px;font-weight:normal;color:#000;transform:scaleX(0.9167);">Euro</span>
<div style="left:218px;top:487px;width:152px;height:23px;background:#ffffff;box-shadow:inset 1px 1px #808080,inset -1px -1px #ffffff,inset 2px 2px #404040,inset -2px -2px #d4d0c8;"></div>
<span class="t" style="left:323.00px;top:490px;font-size:12px;font-weight:normal;color:#000;transform:scaleX(0.8800);">1,000000</span>
<div style="left:218px;top:515px;width:152px;height:23px;background:#ffffff;box-shadow:inset 1px 1px #808080,inset -1px -1px #ffffff,inset 2px 2px #404040,inset -2px -2px #d4d0c8;"></div>
<span class="t" style="left:222.00px;top:518px;font-size:12px;font-weight:normal;color:#000;transform:scaleX(0.9000);">31.12.1998 12:30:00</span>
<div style="left:77px;top:554px;width:309px;height:23px;background:#d4d0c8;box-shadow:inset -1px -1px #404040,inset 1px 1px #ffffff,inset -2px -2px #808080,inset 2px 2px #d4d0c8;"></div>
<span class="t" style="left:127.10px;top:558px;font-size:12px;font-weight:normal;color:#000;transform:scaleX(0.9004);">Diese W&auml;hrung aus der Datenbank l&ouml;schen</span>
<div style="left:473px;top:196px;width:222px;height:324px;background:#d4d0c8;box-shadow:inset -1px -1px #404040,inset 1px 1px #d4d0c8,inset -2px -2px #808080,inset 2px 2px #ffffff"></div>
<div style="left:476px;top:199px;width:216px;height:18px;background:linear-gradient(to right,#0a246a,#a6caf0)"></div>
<span class="t" style="left:478.00px;top:201px;font-size:12px;font-weight:bold;color:#fff;transform:scaleX(0.9062);">Color</span>
<div style="left:674px;top:201px;width:16px;height:14px;background:#d4d0c8;box-shadow:inset -1px -1px #404040,inset 1px 1px #ffffff,inset -2px -2px #808080,inset 2px 2px #d4d0c8;"></div>
<svg style="position:absolute;left:674px;top:201px" width="16" height="14"><path d="M4 3h1v1h-1zM5 3h1v1h-1zM10 3h1v1h-1zM11 3h1v1h-1zM5 4h1v1h-1zM6 4h1v1h-1zM9 4h1v1h-1zM10 4h1v1h-1zM6 5h1v1h-1zM7 5h1v1h-1zM8 5h1v1h-1zM9 5h1v1h-1zM7 6h1v1h-1zM8 6h1v1h-1zM6 7h1v1h-1zM7 7h1v1h-1zM8 7h1v1h-1zM9 7h1v1h-1zM5 8h1v1h-1zM6 8h1v1h-1zM9 8h1v1h-1zM10 8h1v1h-1zM4 9h1v1h-1zM5 9h1v1h-1zM10 9h1v1h-1zM11 9h1v1h-1z" fill="#000"/></svg>
<span class="t" style="left:482.11px;top:225px;font-size:12px;font-weight:normal;color:#000;transform:scaleX(0.8939);">Basic colors:</span>
<div style="left:485px;top:244px;width:20px;height:18px;background:#FF8080;box-shadow:inset 1px 1px #808080,inset -1px -1px #ffffff,inset 2px 2px #404040,inset -2px -2px #d4d0c8;"></div>
<div style="left:510px;top:244px;width:20px;height:18px;background:#FFFF80;box-shadow:inset 1px 1px #808080,inset -1px -1px #ffffff,inset 2px 2px #404040,inset -2px -2px #d4d0c8;"></div>
<div style="left:535px;top:244px;width:20px;height:18px;background:#80FF80;box-shadow:inset 1px 1px #808080,inset -1px -1px #ffffff,inset 2px 2px #404040,inset -2px -2px #d4d0c8;"></div>
<div style="left:560px;top:244px;width:20px;height:18px;background:#00FF80;box-shadow:inset 1px 1px #808080,inset -1px -1px #ffffff,inset 2px 2px #404040,inset -2px -2px #d4d0c8;"></div>
<div style="left:585px;top:244px;width:20px;height:18px;background:#80FFFF;box-shadow:inset 1px 1px #808080,inset -1px -1px #ffffff,inset 2px 2px #404040,inset -2px -2px #d4d0c8;"></div>
<div style="left:610px;top:244px;width:20px;height:18px;background:#0080FF;box-shadow:inset 1px 1px #808080,inset -1px -1px #ffffff,inset 2px 2px #404040,inset -2px -2px #d4d0c8;"></div>
<div style="left:635px;top:244px;width:20px;height:18px;background:#FF80C0;box-shadow:inset 1px 1px #808080,inset -1px -1px #ffffff,inset 2px 2px #404040,inset -2px -2px #d4d0c8;"></div>
<div style="left:660px;top:244px;width:20px;height:18px;background:#FF80FF;box-shadow:inset 1px 1px #808080,inset -1px -1px #ffffff,inset 2px 2px #404040,inset -2px -2px #d4d0c8;"></div>
<div style="left:485px;top:266px;width:20px;height:18px;background:#FF0000;box-shadow:inset 1px 1px #808080,inset -1px -1px #ffffff,inset 2px 2px #404040,inset -2px -2px #d4d0c8;"></div>
<div style="left:510px;top:266px;width:20px;height:18px;background:#FFFF00;box-shadow:inset 1px 1px #808080,inset -1px -1px #ffffff,inset 2px 2px #404040,inset -2px -2px #d4d0c8;"></div>
<div style="left:535px;top:266px;width:20px;height:18px;background:#80FF00;box-shadow:inset 1px 1px #808080,inset -1px -1px #ffffff,inset 2px 2px #404040,inset -2px -2px #d4d0c8;"></div>
<div style="left:560px;top:266px;width:20px;height:18px;background:#00FF40;box-shadow:inset 1px 1px #808080,inset -1px -1px #ffffff,inset 2px 2px #404040,inset -2px -2px #d4d0c8;"></div>
<div style="left:585px;top:266px;width:20px;height:18px;background:#00FFFF;box-shadow:inset 1px 1px #808080,inset -1px -1px #ffffff,inset 2px 2px #404040,inset -2px -2px #d4d0c8;"></div>
<div style="left:610px;top:266px;width:20px;height:18px;background:#0080C0;box-shadow:inset 1px 1px #808080,inset -1px -1px #ffffff,inset 2px 2px #404040,inset -2px -2px #d4d0c8;"></div>
<div style="left:635px;top:266px;width:20px;height:18px;background:#8080C0;box-shadow:inset 1px 1px #808080,inset -1px -1px #ffffff,inset 2px 2px #404040,inset -2px -2px #d4d0c8;"></div>
<div style="left:660px;top:266px;width:20px;height:18px;background:#FF00FF;box-shadow:inset 1px 1px #808080,inset -1px -1px #ffffff,inset 2px 2px #404040,inset -2px -2px #d4d0c8;"></div>
<div style="left:485px;top:288px;width:20px;height:18px;background:#804040;box-shadow:inset 1px 1px #808080,inset -1px -1px #ffffff,inset 2px 2px #404040,inset -2px -2px #d4d0c8;"></div>
<div style="left:510px;top:288px;width:20px;height:18px;background:#FF8040;box-shadow:inset 1px 1px #808080,inset -1px -1px #ffffff,inset 2px 2px #404040,inset -2px -2px #d4d0c8;"></div>
<div style="left:535px;top:288px;width:20px;height:18px;background:#00FF00;box-shadow:inset 1px 1px #808080,inset -1px -1px #ffffff,inset 2px 2px #404040,inset -2px -2px #d4d0c8;"></div>
<div style="left:560px;top:288px;width:20px;height:18px;background:#008080;box-shadow:inset 1px 1px #808080,inset -1px -1px #ffffff,inset 2px 2px #404040,inset -2px -2px #d4d0c8;"></div>
<div style="left:585px;top:288px;width:20px;height:18px;background:#004080;box-shadow:inset 1px 1px #808080,inset -1px -1px #ffffff,inset 2px 2px #404040,inset -2px -2px #d4d0c8;"></div>
<div style="left:610px;top:288px;width:20px;height:18px;background:#8080FF;box-shadow:inset 1px 1px #808080,inset -1px -1px #ffffff,inset 2px 2px #404040,inset -2px -2px #d4d0c8;"></div>
<div style="left:635px;top:288px;width:20px;height:18px;background:#800040;box-shadow:inset 1px 1px #808080,inset -1px -1px #ffffff,inset 2px 2px #404040,inset -2px -2px #d4d0c8;"></div>
<div style="left:660px;top:288px;width:20px;height:18px;background:#FF0080;box-shadow:inset 1px 1px #808080,inset -1px -1px #ffffff,inset 2px 2px #404040,inset -2px -2px #d4d0c8;"></div>
<div style="left:485px;top:310px;width:20px;height:18px;background:#800000;box-shadow:inset 1px 1px #808080,inset -1px -1px #ffffff,inset 2px 2px #404040,inset -2px -2px #d4d0c8;"></div>
<div style="left:510px;top:310px;width:20px;height:18px;background:#FF8000;box-shadow:inset 1px 1px #808080,inset -1px -1px #ffffff,inset 2px 2px #404040,inset -2px -2px #d4d0c8;"></div>
<div style="left:535px;top:310px;width:20px;height:18px;background:#008000;box-shadow:inset 1px 1px #808080,inset -1px -1px #ffffff,inset 2px 2px #404040,inset -2px -2px #d4d0c8;"></div>
<div style="left:560px;top:310px;width:20px;height:18px;background:#008040;box-shadow:inset 1px 1px #808080,inset -1px -1px #ffffff,inset 2px 2px #404040,inset -2px -2px #d4d0c8;"></div>
<div style="left:585px;top:310px;width:20px;height:18px;background:#0000FF;box-shadow:inset 1px 1px #808080,inset -1px -1px #ffffff,inset 2px 2px #404040,inset -2px -2px #d4d0c8;"></div>
<div style="left:610px;top:310px;width:20px;height:18px;background:#0000A0;box-shadow:inset 1px 1px #808080,inset -1px -1px #ffffff,inset 2px 2px #404040,inset -2px -2px #d4d0c8;"></div>
<div style="left:635px;top:310px;width:20px;height:18px;background:#800080;box-shadow:inset 1px 1px #808080,inset -1px -1px #ffffff,inset 2px 2px #404040,inset -2px -2px #d4d0c8;"></div>
<div style="left:660px;top:310px;width:20px;height:18px;background:#8000FF;box-shadow:inset 1px 1px #808080,inset -1px -1px #ffffff,inset 2px 2px #404040,inset -2px -2px #d4d0c8;"></div>
<div style="left:485px;top:332px;width:20px;height:18px;background:#400000;box-shadow:inset 1px 1px #808080,inset -1px -1px #ffffff,inset 2px 2px #404040,inset -2px -2px #d4d0c8;"></div>
<div style="left:510px;top:332px;width:20px;height:18px;background:#804000;box-shadow:inset 1px 1px #808080,inset -1px -1px #ffffff,inset 2px 2px #404040,inset -2px -2px #d4d0c8;"></div>
<div style="left:535px;top:332px;width:20px;height:18px;background:#004000;box-shadow:inset 1px 1px #808080,inset -1px -1px #ffffff,inset 2px 2px #404040,inset -2px -2px #d4d0c8;"></div>
<div style="left:560px;top:332px;width:20px;height:18px;background:#004040;box-shadow:inset 1px 1px #808080,inset -1px -1px #ffffff,inset 2px 2px #404040,inset -2px -2px #d4d0c8;"></div>
<div style="left:585px;top:332px;width:20px;height:18px;background:#000080;box-shadow:inset 1px 1px #808080,inset -1px -1px #ffffff,inset 2px 2px #404040,inset -2px -2px #d4d0c8;"></div>
<div style="left:610px;top:332px;width:20px;height:18px;background:#000040;box-shadow:inset 1px 1px #808080,inset -1px -1px #ffffff,inset 2px 2px #404040,inset -2px -2px #d4d0c8;"></div>
<div style="left:635px;top:332px;width:20px;height:18px;background:#400040;box-shadow:inset 1px 1px #808080,inset -1px -1px #ffffff,inset 2px 2px #404040,inset -2px -2px #d4d0c8;"></div>
<div style="left:660px;top:332px;width:20px;height:18px;background:#400080;box-shadow:inset 1px 1px #808080,inset -1px -1px #ffffff,inset 2px 2px #404040,inset -2px -2px #d4d0c8;"></div>
<div style="left:485px;top:354px;width:20px;height:18px;background:#000000;box-shadow:inset 1px 1px #808080,inset -1px -1px #ffffff,inset 2px 2px #404040,inset -2px -2px #d4d0c8;"></div>
<div style="left:510px;top:354px;width:20px;height:18px;background:#808000;box-shadow:inset 1px 1px #808080,inset -1px -1px #ffffff,inset 2px 2px #404040,inset -2px -2px #d4d0c8;"></div>
<div style="left:535px;top:354px;width:20px;height:18px;background:#808040;box-shadow:inset 1px 1px #808080,inset -1px -1px #ffffff,inset 2px 2px #404040,inset -2px -2px #d4d0c8;"></div>
<div style="left:560px;top:354px;width:20px;height:18px;background:#808080;box-shadow:inset 1px 1px #808080,inset -1px -1px #ffffff,inset 2px 2px #404040,inset -2px -2px #d4d0c8;"></div>
<div style="left:585px;top:354px;width:20px;height:18px;background:#408080;box-shadow:inset 1px 1px #808080,inset -1px -1px #ffffff,inset 2px 2px #404040,inset -2px -2px #d4d0c8;"></div>
<div style="left:610px;top:354px;width:20px;height:18px;background:#C0C0C0;box-shadow:inset 1px 1px #808080,inset -1px -1px #ffffff,inset 2px 2px #404040,inset -2px -2px #d4d0c8;"></div>
<div style="left:635px;top:354px;width:20px;height:18px;background:#400040;box-shadow:inset 1px 1px #808080,inset -1px -1px #ffffff,inset 2px 2px #404040,inset -2px -2px #d4d0c8;"></div>
<div style="left:660px;top:354px;width:20px;height:18px;background:#FFFFFF;box-shadow:inset 1px 1px #808080,inset -1px -1px #ffffff,inset 2px 2px #404040,inset -2px -2px #d4d0c8;"></div>
<div style="left:484px;top:353px;width:22px;height:20px;border:1px solid #000;box-sizing:border-box"></div>
<div style="left:482px;top:351px;width:26px;height:24px;border:1px dotted #000;box-sizing:border-box"></div>
<span class="t" style="left:482.00px;top:390px;font-size:12px;font-weight:normal;color:#000;transform:scaleX(0.8734);">Custom colors:</span>
<div style="left:485px;top:410px;width:20px;height:18px;background:#ffffff;box-shadow:inset 1px 1px #808080,inset -1px -1px #ffffff,inset 2px 2px #404040,inset -2px -2px #d4d0c8;"></div>
<div style="left:510px;top:410px;width:20px;height:18px;background:#ffffff;box-shadow:inset 1px 1px #808080,inset -1px -1px #ffffff,inset 2px 2px #404040,inset -2px -2px #d4d0c8;"></div>
<div style="left:535px;top:410px;width:20px;height:18px;background:#ffffff;box-shadow:inset 1px 1px #808080,inset -1px -1px #ffffff,inset 2px 2px #404040,inset -2px -2px #d4d0c8;"></div>
<div style="left:560px;top:410px;width:20px;height:18px;background:#ffffff;box-shadow:inset 1px 1px #808080,inset -1px -1px #ffffff,inset 2px 2px #404040,inset -2px -2px #d4d0c8;"></div>
<div style="left:585px;top:410px;width:20px;height:18px;background:#ffffff;box-shadow:inset 1px 1px #808080,inset -1px -1px #ffffff,inset 2px 2px #404040,inset -2px -2px #d4d0c8;"></div>
<div style="left:610px;top:410px;width:20px;height:18px;background:#ffffff;box-shadow:inset 1px 1px #808080,inset -1px -1px #ffffff,inset 2px 2px #404040,inset -2px -2px #d4d0c8;"></div>
<div style="left:635px;top:410px;width:20px;height:18px;background:#ffffff;box-shadow:inset 1px 1px #808080,inset -1px -1px #ffffff,inset 2px 2px #404040,inset -2px -2px #d4d0c8;"></div>
<div style="left:660px;top:410px;width:20px;height:18px;background:#ffffff;box-shadow:inset 1px 1px #808080,inset -1px -1px #ffffff,inset 2px 2px #404040,inset -2px -2px #d4d0c8;"></div>
<div style="left:485px;top:432px;width:20px;height:18px;background:#ffffff;box-shadow:inset 1px 1px #808080,inset -1px -1px #ffffff,inset 2px 2px #404040,inset -2px -2px #d4d0c8;"></div>
<div style="left:510px;top:432px;width:20px;height:18px;background:#ffffff;box-shadow:inset 1px 1px #808080,inset -1px -1px #ffffff,inset 2px 2px #404040,inset -2px -2px #d4d0c8;"></div>
<div style="left:535px;top:432px;width:20px;height:18px;background:#ffffff;box-shadow:inset 1px 1px #808080,inset -1px -1px #ffffff,inset 2px 2px #404040,inset -2px -2px #d4d0c8;"></div>
<div style="left:560px;top:432px;width:20px;height:18px;background:#ffffff;box-shadow:inset 1px 1px #808080,inset -1px -1px #ffffff,inset 2px 2px #404040,inset -2px -2px #d4d0c8;"></div>
<div style="left:585px;top:432px;width:20px;height:18px;background:#ffffff;box-shadow:inset 1px 1px #808080,inset -1px -1px #ffffff,inset 2px 2px #404040,inset -2px -2px #d4d0c8;"></div>
<div style="left:610px;top:432px;width:20px;height:18px;background:#ffffff;box-shadow:inset 1px 1px #808080,inset -1px -1px #ffffff,inset 2px 2px #404040,inset -2px -2px #d4d0c8;"></div>
<div style="left:635px;top:432px;width:20px;height:18px;background:#ffffff;box-shadow:inset 1px 1px #808080,inset -1px -1px #ffffff,inset 2px 2px #404040,inset -2px -2px #d4d0c8;"></div>
<div style="left:660px;top:432px;width:20px;height:18px;background:#ffffff;box-shadow:inset 1px 1px #808080,inset -1px -1px #ffffff,inset 2px 2px #404040,inset -2px -2px #d4d0c8;"></div>
<div style="left:482px;top:462px;width:210px;height:23px;background:#d4d0c8;box-shadow:inset -1px -1px #404040,inset 1px 1px #ffffff,inset -2px -2px #808080,inset 2px 2px #d4d0c8;"></div>
<span class="t" style="left:529.14px;top:466px;font-size:12px;font-weight:normal;color:#000;transform:scaleX(0.8582);">Define Custom Colors &gt;&gt;</span>
<div style="left:482px;top:488px;width:66px;height:23px;background:#d4d0c8;box-shadow:inset -1px -1px #000,inset 1px 1px #000,inset -2px -2px #404040,inset 2px 2px #ffffff,inset -3px -3px #808080,inset 3px 3px #d4d0c8"></div>
<span class="t" style="left:507.00px;top:492px;font-size:12px;font-weight:normal;color:#000;transform:scaleX(0.8824);">OK</span>
<div style="left:554px;top:488px;width:66px;height:23px;background:#d4d0c8;box-shadow:inset -1px -1px #404040,inset 1px 1px #ffffff,inset -2px -2px #808080,inset 2px 2px #d4d0c8;"></div>
<span class="t" style="left:569.00px;top:492px;font-size:12px;font-weight:normal;color:#000;transform:scaleX(0.9189);">Cancel</span>
<svg style="position:absolute;left:0;top:0" width="731" height="644">
<defs><filter id="sh" x="-20%" y="-20%" width="140%" height="140%"><feGaussianBlur stdDeviation="1.5"/></filter></defs>
<g opacity="0.35" filter="url(#sh)" transform="translate(3,3)">
<line x1="25.8" y1="37.6" x2="60" y2="71.5" stroke="#000" stroke-width="3"/>
<polygon points="69.6,80.8 54.3,76.5 64.8,66.9" fill="#000"/>
<line x1="283.5" y1="212.3" x2="465" y2="209" stroke="#000" stroke-width="3"/>
<polygon points="477,208.5 462.8,202 462.8,216" fill="#000"/>
</g>
<line x1="25.8" y1="37.6" x2="60" y2="71.5" stroke="#c40000" stroke-width="3"/>
<polygon points="69.6,80.8 54.3,76.5 64.8,66.9" fill="#c40000"/>
<line x1="283.5" y1="212.3" x2="465" y2="209" stroke="#c40000" stroke-width="3"/>
<polygon points="477,208.5 462.8,202 462.8,216" fill="#c40000"/>
</svg>
</body></html>
